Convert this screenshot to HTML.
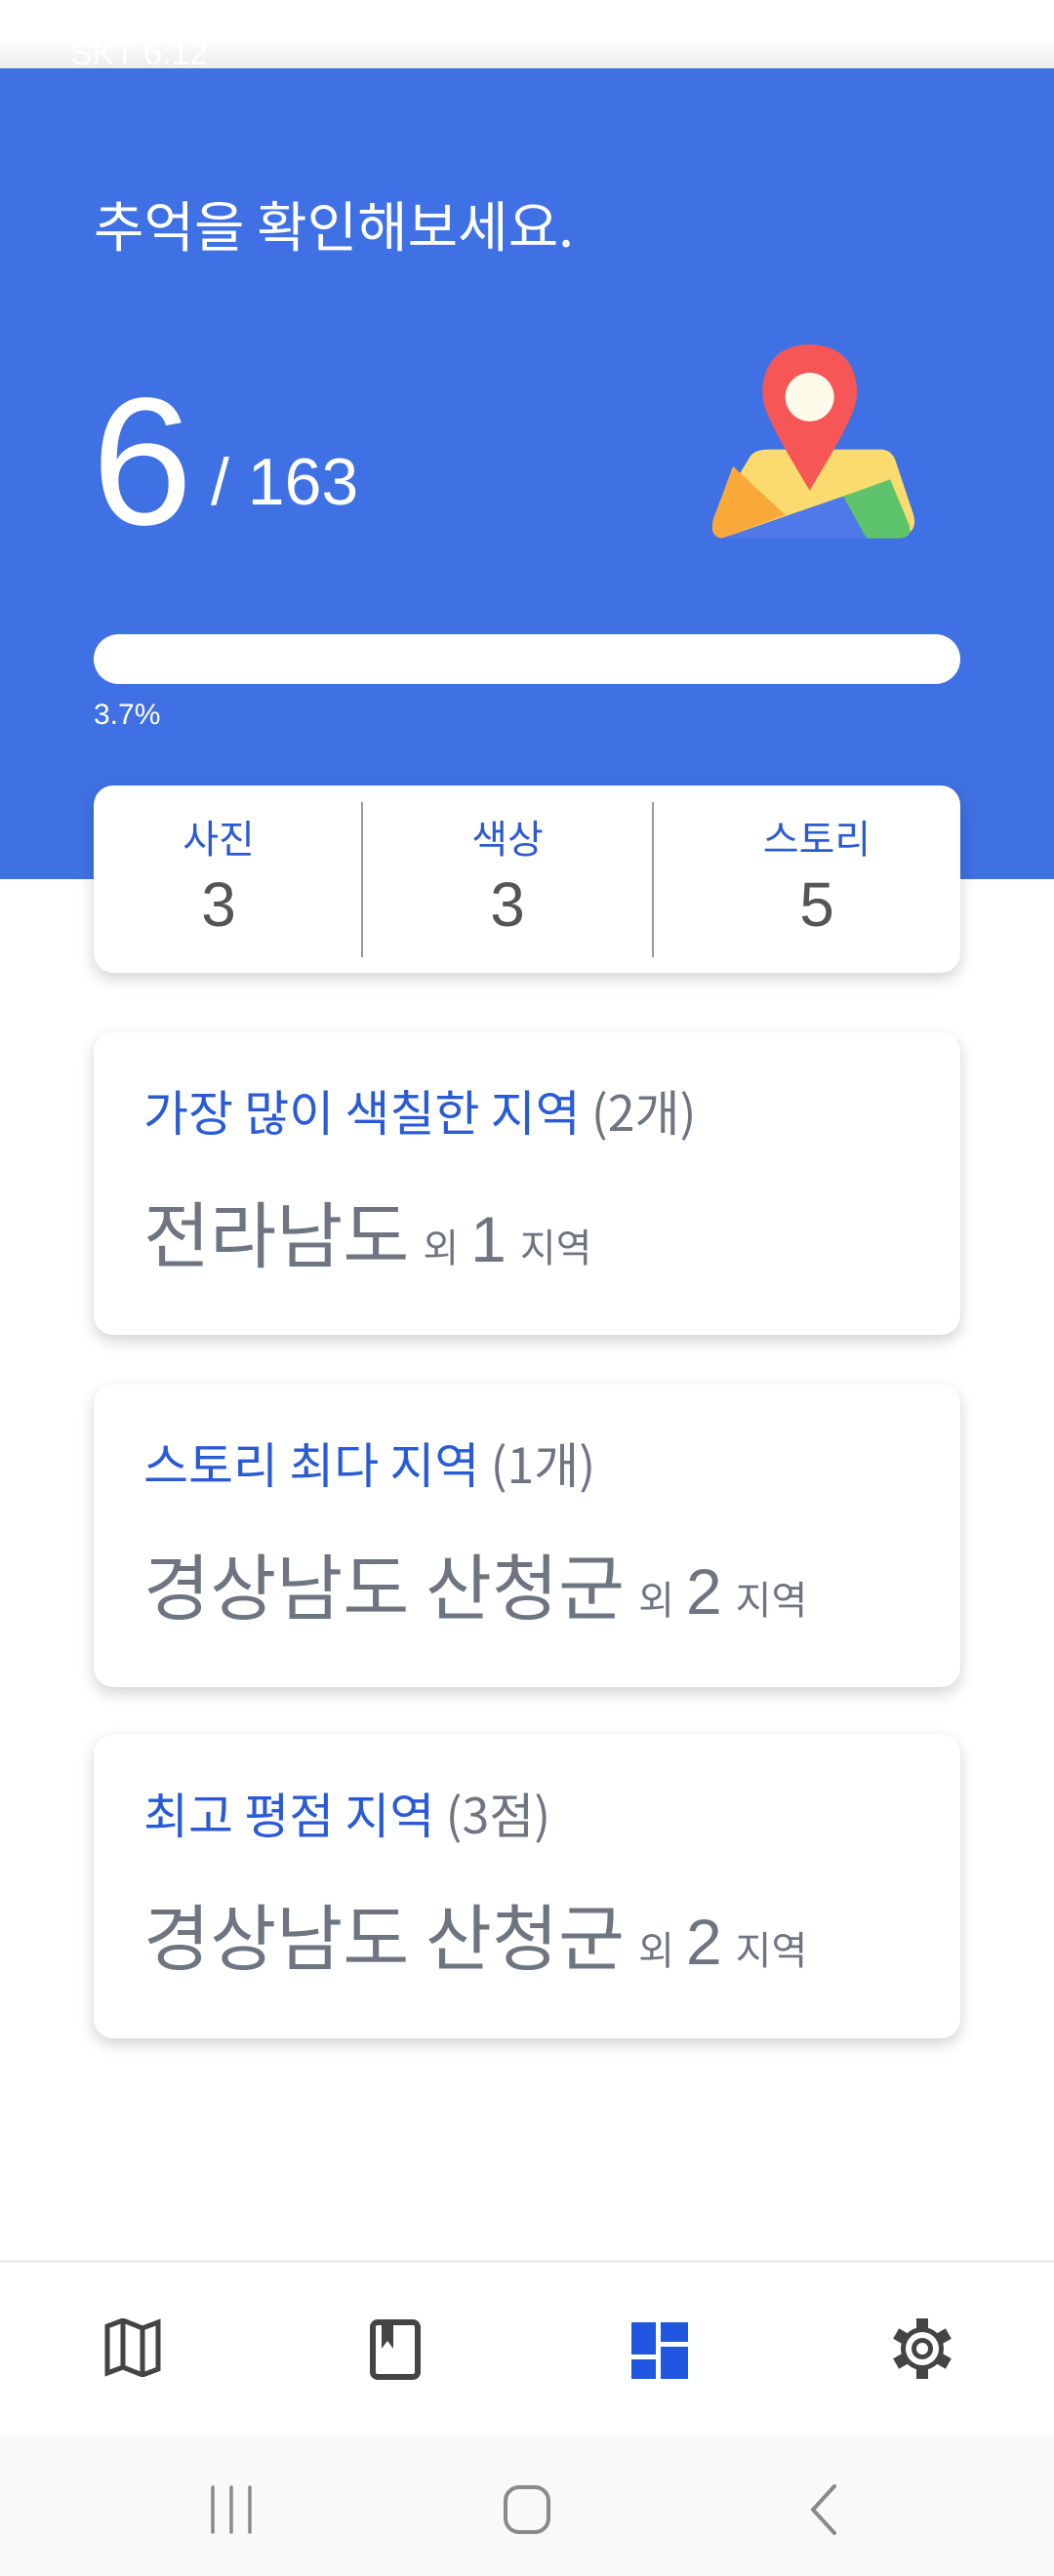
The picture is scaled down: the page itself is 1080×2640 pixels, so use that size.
<!DOCTYPE html>
<html><head><meta charset="utf-8"><style>
*{margin:0;padding:0;box-sizing:border-box}
body{width:1080px;height:2640px;background:#fff;position:relative;overflow:hidden;font-family:"Liberation Sans","Noto Sans CJK KR",sans-serif}
.top{position:absolute;left:0;top:0;width:1080px;height:70px;background:linear-gradient(#fff 0,#fff 40px,#ececec 70px)}
.blue{position:absolute;left:0;top:70px;width:1080px;height:831px;background:#3F71E4}
.ab{position:absolute}
.kr{font-family:"Noto Sans CJK KR","Liberation Sans",sans-serif}
.card{position:absolute;left:96px;width:888px;background:#fff;border-radius:20px;box-shadow:0 6px 16px rgba(0,0,0,.18)}
.stat{position:absolute;top:0;text-align:center;width:200px}
.lbl{font-size:40px;color:#2C5AD3;line-height:1}
.num{font-size:64px;color:#555;line-height:1;margin-top:18px}
.ttl{position:absolute;left:51px;top:50px;font-size:50px;color:#2A5BD7;white-space:nowrap;line-height:1.2}
.ttl span{color:#6E7480}
.big{position:absolute;left:51px;top:160px;white-space:nowrap;color:#6E7480;line-height:1.2}
.big .a{font-size:74px;margin-right:14px}
.big .b{font-size:40px}
.big .c{font-size:66px;font-family:"Liberation Sans",sans-serif;margin:0 14px 0 12px}
</style></head><body>
<div class="top"></div>
<div class="ab" style="left:72px;top:36px;font-size:34px;color:rgba(255,255,255,.9);">SKT 6:12</div>
<div class="blue"></div>
<div class="ab kr" style="left:96px;top:196px;font-size:56px;color:#fff;line-height:1.2">추억을 확인해보세요.</div>
<div class="ab" style="left:94px;top:362px;font-size:186px;color:#fff;line-height:1.2;font-weight:300">6</div>
<div class="ab" style="left:216px;top:454px;font-size:68px;color:#fff;line-height:1.2">/ 163</div>
<svg class="ab" style="left:728px;top:346px" width="211" height="210" viewBox="28 24 220 212">
 <path d="M70 148 Q75 140 90 140 L210 140 Q220 140 225 150 L245 210 Q250 230 230 232 L45 232 Q25 232 32 212 Z" fill="#FBDB6E"/>
 <path d="M52 158 L108 210 L40 235 Q25 232 32 212 Z" fill="#F9A83A"/>
 <path d="M40 235 L170 190 L195 235 Z" fill="#4F78E8"/>
 <path d="M170 190 L220 172 L240 220 Q245 235 228 235 L195 235 Z" fill="#5EC46C"/>
 <path d="M134 28 C82 28 78 78 88 100 C98 125 120 160 134 184 C148 160 170 125 180 100 C190 78 186 28 134 28 Z" fill="#F65656"/>
 <circle cx="134" cy="84" r="26" fill="#FFFBEB"/>
</svg>
<div class="ab" style="left:96px;top:650px;width:888px;height:51px;background:#fff;border-radius:26px"></div>
<div class="ab" style="left:96px;top:716px;font-size:30px;color:#fff">3.7%</div>

<div class="card" style="top:805px;height:192px;border-radius:20px">
 <div class="ab" style="left:274px;top:17px;width:2px;height:159px;background:#999"></div>
 <div class="ab" style="left:572px;top:17px;width:2px;height:159px;background:#999"></div>
 <div class="stat kr" style="left:28px;top:32px"><div class="lbl">사진</div><div class="num" style="font-family:'Liberation Sans',sans-serif">3</div></div>
 <div class="stat kr" style="left:324px;top:32px"><div class="lbl">색상</div><div class="num" style="font-family:'Liberation Sans',sans-serif">3</div></div>
 <div class="stat kr" style="left:641px;top:32px"><div class="lbl">스토리</div><div class="num" style="font-family:'Liberation Sans',sans-serif">5</div></div>
</div>

<div class="card kr" style="top:1058px;height:310px">
 <div class="ttl">가장 많이 색칠한 지역 <span>(2개)</span></div>
 <div class="big"><span class="a">전라남도</span><span class="b">외</span><span class="c">1</span><span class="b">지역</span></div>
</div>
<div class="card kr" style="top:1419px;height:310px">
 <div class="ttl">스토리 최다 지역 <span>(1개)</span></div>
 <div class="big"><span class="a">경상남도 산청군</span><span class="b">외</span><span class="c">2</span><span class="b">지역</span></div>
</div>
<div class="card kr" style="top:1778px;height:311px">
 <div class="ttl">최고 평점 지역 <span>(3점)</span></div>
 <div class="big"><span class="a">경상남도 산청군</span><span class="b">외</span><span class="c">2</span><span class="b">지역</span></div>
</div>

<div class="ab" style="left:0;top:2316px;width:1080px;height:3px;background:#ececec"></div>
<svg class="ab" style="left:106px;top:2376px" width="60" height="60" viewBox="0 0 60 60" fill="none" stroke="#444" stroke-width="5" stroke-linejoin="miter">
 <path d="M4 8 L20 2 L40 10 L56 4 L56 52 L40 58 L20 50 L4 56 Z"/><path d="M20 2 V50 M40 10 V58"/>
</svg>
<svg class="ab" style="left:379px;top:2377px" width="54" height="62" viewBox="0 0 54 62">
 <rect x="3" y="3" width="46" height="56" rx="5" fill="none" stroke="#444" stroke-width="6"/>
 <path d="M12 3 H24 V30 L18 22 L12 30 Z" fill="#444"/>
</svg>
<svg class="ab" style="left:647px;top:2380px" width="58" height="58" viewBox="0 0 58 58" fill="#2157E0">
 <rect x="0" y="0" width="25" height="33"/><rect x="0" y="38" width="25" height="20"/><rect x="30" y="0" width="28" height="20"/><rect x="30" y="25" width="28" height="33"/>
</svg>
<svg class="ab" style="left:913px;top:2375px" width="64" height="64" viewBox="-32 -32 64 64">
 <g fill="#444"><circle r="22"/>
 <g id="t"><rect x="-6" y="-31" width="12" height="14"/></g>
 <use href="#t" transform="rotate(60)"/><use href="#t" transform="rotate(120)"/><use href="#t" transform="rotate(180)"/><use href="#t" transform="rotate(240)"/><use href="#t" transform="rotate(300)"/></g>
 <circle r="17" fill="#fff"/><circle r="11" fill="#444"/><circle r="6" fill="#fff"/>
</svg>
<div class="ab" style="left:0;top:2497px;width:1080px;height:143px;background:#f9f9f9"></div>
<svg class="ab" style="left:214px;top:2546px" width="50" height="52" viewBox="0 0 50 52" stroke="#8a8a8a" stroke-width="3.5" stroke-linecap="round"><path d="M4 3V49M23 3V49M42 3V49"/></svg>
<svg class="ab" style="left:514px;top:2546px" width="52" height="52" viewBox="0 0 52 52"><rect x="4" y="3" width="44" height="46" rx="14" fill="none" stroke="#8a8a8a" stroke-width="4"/></svg>
<svg class="ab" style="left:825px;top:2544px" width="36" height="56" viewBox="0 0 36 56"><path d="M30 4 L8 28 L30 52" fill="none" stroke="#8a8a8a" stroke-width="4" stroke-linecap="round"/></svg>
</body></html>
